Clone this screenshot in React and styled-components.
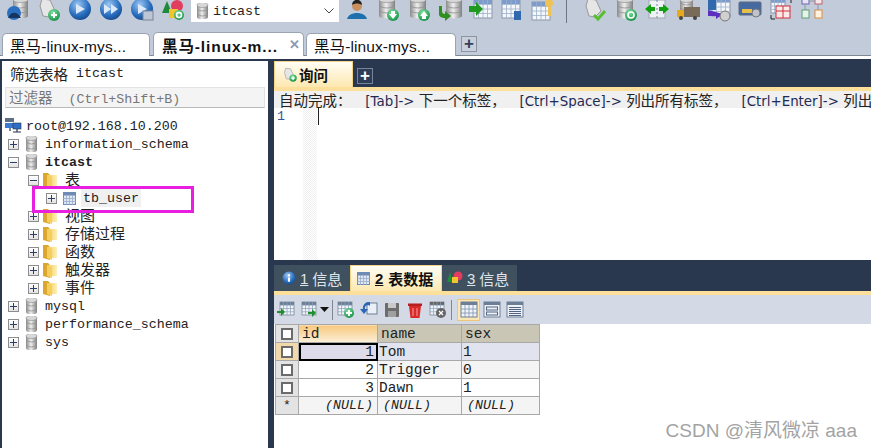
import styled, { createGlobalStyle } from "styled-components";

const GlobalStyle = createGlobalStyle`
  html, body { margin: 0; padding: 0; width: 871px; height: 448px; overflow: hidden; background: #29374f; }
  * { box-sizing: border-box; }
`;

const CJK = `"Noto Sans CJK SC", sans-serif`;
const MONO = `"Liberation Mono", "Noto Sans CJK SC", monospace`;
const SANS = `"Liberation Sans", "Noto Sans CJK SC", sans-serif`;

const Page = styled.div`
  position: relative;
  width: 871px;
  height: 448px;
  overflow: hidden;
  display: flex;
  flex-direction: column;
  background: #29374f;
`;

const Toolbar = styled.div`
  height: 32px;
  flex: none;
  display: flex;
  align-items: flex-start;
  padding-left: 2px;
  background: #c2cbd9;
  overflow: hidden;
`;

const ToolSlot = styled.div`
  width: 31px;
  height: 24px;
  flex: none;
  display: flex;
  justify-content: center;
  margin-top: -2px;
`;

const ToolSeparator = styled.div`
  width: 1px;
  height: 23px;
  margin: 0 12px 0 8px;
  background: #6d7683;
  flex: none;
`;

const DbSelect = styled.div`
  width: 148px;
  height: 22px;
  margin: 0 2px 0 3px;
  flex: none;
  display: flex;
  align-items: center;
  gap: 4px;
  padding-left: 5px;
  background: #fff;
  font: 13.3px ${MONO};
  color: #222;
`;

const Chevron = styled.svg`
  margin-left: auto;
  margin-right: 5px;
`;

const SessionBar = styled.div`
  height: 24px;
  flex: none;
  display: flex;
  align-items: flex-end;
  padding-left: 2px;
  background: #c2cbd9;
  border-bottom: 1px solid #7f8790;
`;

const SessionTab = styled.div`
  width: ${(p) => p.$w}px;
  margin-left: ${(p) => p.$gap}px;
  height: ${(p) => (p.$active ? 24 : 23)}px;
  margin-bottom: -1px;
  padding: 0 0 0 ${(p) => (p.$active ? 8 : 7)}px;
  display: flex;
  align-items: center;
  justify-content: space-between;
  background: #fff;
  border: 1px solid #9aa3b0;
  border-bottom: none;
  border-radius: 5px 5px 0 0;
  font: ${(p) => (p.$active ? "bold" : "normal")} 15.5px ${SANS};
  letter-spacing: ${(p) => (p.$active ? "0.9px" : "0.1px")};
  color: #111;
  white-space: nowrap;
  overflow: hidden;
`;

const CloseMark = styled.span`
  margin-right: 2px;
  font: bold 13px ${SANS};
  color: #8b9bb5;
`;

const AddSession = styled.div`
  width: 16px;
  height: 16px;
  margin: 0 0 3px 5px;
  display: flex;
  align-items: center;
  justify-content: center;
  background: #c9d0db;
  border: 1px solid #8c95a2;
  color: #33415c;
  font: bold 17px/14px ${SANS};
`;

const WhiteStrip = styled.div`
  height: 3px;
  flex: none;
  background: #fff;
`;

const Workspace = styled.div`
  flex: 1;
  min-height: 0;
  display: flex;
  padding-left: 2px;
`;

const LeftPanel = styled.aside`
  width: 266px;
  flex: none;
  margin-top: 2px;
  display: flex;
  flex-direction: column;
  background: #fff;
`;

const FilterTitle = styled.div`
  height: 26px;
  padding: 0 0 2px 8px;
  display: flex;
  align-items: center;
  gap: 8px;
  font: 13.3px ${MONO};
  color: #222;
`;

const FilterInput = styled.div`
  height: 21px;
  margin: 0 3px 0 3px;
  padding-left: 3px;
  background: #f4f4f4;
  border: 1px solid #e3e3e3;
  border-bottom: 1px solid #b9b9b9;
  font: 13.3px/18px ${MONO};
  color: #777;
  white-space: pre;
`;

const Tree = styled.div`
  padding-top: 9px;
  display: flex;
  flex-direction: column;
`;

const TreeRow = styled.div`
  height: 18px;
  display: flex;
  align-items: center;
  padding-left: ${(p) => p.$indent}px;
  font: ${(p) => (p.$bold ? "bold" : "normal")} 13.3px/18px ${MONO};
  color: #222;
  white-space: nowrap;
`;

const Expander = styled.span`
  width: 11px;
  height: 11px;
  flex: none;
  margin-right: 6px;
  position: relative;
  background: linear-gradient(#fff, #e2e2e2);
  border: 1px solid #8d8d8d;
  &::before {
    content: "";
    position: absolute;
    left: 1px;
    right: 1px;
    top: 4px;
    height: 1px;
    background: #2d3f66;
  }
  &::after {
    content: "";
    display: ${(p) => (p.$open ? "none" : "block")};
    position: absolute;
    top: 1px;
    bottom: 1px;
    left: 4px;
    width: 1px;
    background: #2d3f66;
  }
`;

const TreeLabel = styled.span`
  display: block;
  height: 18px;
  margin-left: ${(p) => p.$gap}px;
  padding: ${(p) => (p.$selected ? "2px 2px 0" : "2px 0 0")};
  line-height: 16px;
  background: ${(p) => (p.$selected ? "#f0f0f0" : "transparent")};
`;

const FolderLabel = styled.span`
  display: block;
  height: 16px;
  margin: 0 0 2px 8px;
  font: 15px/16px ${CJK};
`;

const Highlight = styled.div`
  position: absolute;
  left: 32px;
  top: 186px;
  width: 162px;
  height: 27px;
  border: 3px solid #e81fe0;
`;

const RightPanel = styled.main`
  margin-left: 6px;
  flex: 1;
  min-width: 0;
  display: flex;
  flex-direction: column;
`;

const QueryTabs = styled.div`
  height: 26px;
  flex: none;
  margin-top: 2px;
  display: flex;
  align-items: flex-start;
`;

const QueryTab = styled.div`
  width: 79px;
  height: 26px;
  padding-left: 7px;
  display: flex;
  align-items: center;
  gap: 1px;
  background: linear-gradient(#fffdf4, #fde8b0);
  border: 1px solid #f3d488;
  border-bottom: none;
  font: bold 14.5px ${CJK};
  color: #111;
`;

const AddQuery = styled.div`
  width: 16px;
  height: 16px;
  margin: 7px 0 0 4px;
  display: flex;
  align-items: center;
  justify-content: center;
  background: #2e3d57;
  border: 1px solid #77839a;
  color: #fff;
  font: bold 17px/14px ${SANS};
`;

const GoldStrip = styled.div`
  height: 4px;
  flex: none;
  background: #fbdf9b;
`;

const HintBar = styled.div`
  height: 17px;
  flex: none;
  padding-left: 5px;
  background: #f0f0f0;
  font: 13.4px/17px "DejaVu Sans", sans-serif;
  color: #222;
  white-space: pre;
  overflow: hidden;
`;

const Cn = styled.span`
  font-family: ${CJK};
  font-size: 14.5px;
  font-weight: normal;
`;

const HintKey = styled.span`
  color: #1f2a55;
  margin-left: 1px;
`;

const Editor = styled.div`
  height: 152px;
  flex: none;
  display: flex;
  background: #fff;
`;

const Gutter = styled.div`
  width: 29px;
  padding: 0 0 0 3px;
  font: 13.3px/17px ${MONO};
  color: #3155a0;
`;

const FoldMargin = styled.div`
  width: 14px;
  background: repeating-conic-gradient(#f0f0f0 0 25%, #fff 0 50%) 0 0 / 2px 2px;
`;

const Caret = styled.div`
  width: 1px;
  height: 17px;
  margin-left: 1px;
  background: #222;
`;

const ResultTabs = styled.div`
  height: 31px;
  flex: none;
  padding-top: 5px;
  display: flex;
`;

const ResultTab = styled.div`
  width: ${(p) => p.$w}px;
  height: 26px;
  padding-left: ${(p) => (p.$active ? 6 : 8)}px;
  display: flex;
  align-items: center;
  gap: ${(p) => (p.$active ? 5 : 4)}px;
  background: ${(p) => (p.$active ? "linear-gradient(#fffdf4, #fde8b0)" : "#3f505f")};
  border: ${(p) => (p.$active ? "1px solid #f3d488" : "none")};
  border-bottom: none;
  font: ${(p) => (p.$active ? "bold" : "normal")} 15px ${CJK};
  color: ${(p) => (p.$active ? "#111" : "#dfe4ea")};
  &:last-child {
    padding-left: 5px;
  }
`;

const TabNum = styled.span`
  font-family: ${SANS};
  text-decoration: underline;
`;

const ResultBar = styled.div`
  height: 29px;
  flex: none;
  display: flex;
  align-items: center;
  background: #d3dae5;
`;

const BarSlot = styled.div`
  width: ${(p) => p.$w || 23}px;
  height: 22px;
  flex: none;
  display: flex;
  align-items: center;
  justify-content: center;
  gap: 1px;
  background: ${(p) => (p.$on ? "#fbe6b4" : "transparent")};
  border: ${(p) => (p.$on ? "1px solid #edc67a" : "none")};
`;

const BarSeparator = styled.div`
  width: 1px;
  height: 20px;
  margin: 0 ${(p) => p.$right}px 0 ${(p) => p.$left}px;
  flex: none;
  background: #7f8794;
`;

const GridArea = styled.div`
  flex: 1;
  background: #fff;
`;

const DataGrid = styled.table`
  margin-left: 1px;
  border-collapse: collapse;
  table-layout: fixed;
  width: 264px;
  font: 14.5px ${MONO};
  color: #222;
`;

const HeadCell = styled.th`
  height: 18px;
  padding: 0 0 0 3px;
  text-align: left;
  font-weight: normal;
  border: 1px solid #a8a8a8;
  background: ${(p) => (p.$sorted ? "linear-gradient(#f7c87d, #fcf0da)" : "#c9c6b5")};
`;

const MarkCell = styled.td`
  padding: 0;
  height: 18px;
  border: 1px solid #a8a8a8;
  background: ${(p) => (p.$lit ? "#f2d9a9" : "#e3e3e3")};
  text-align: center;
  line-height: 0;
`;

const Star = styled.span`
  font: 13px/14px ${MONO};
`;

const CheckBox = styled.span`
  display: inline-block;
  width: 12px;
  height: 12px;
  background: #fff;
  border: 2px solid #6b6b6b;
`;

const DataCell = styled.td`
  padding: ${(p) => (p.$right ? "0 3px 0 0" : "0 0 0 1px")};
  height: 18px;
  border: 1px solid #a8a8a8;
  text-align: ${(p) => (p.$right ? "right" : "left")};
  background: ${(p) => p.$bg};
  font-style: ${(p) => (p.$nil ? "italic" : "normal")};
  font-size: ${(p) => (p.$nil ? "13.3px" : "14.5px")};
  ${(p) => p.$nil && "padding: 0 0 0 5px;"}
  ${(p) => p.$nil && p.$right && "padding: 0 4px 0 0;"}
  ${(p) => p.$focus && "outline: 2px solid #000; outline-offset: -2px; background: #dddbe9;"}
`;

const Watermark = styled.div`
  position: absolute;
  right: 14px;
  top: 415px;
  font: 19px ${SANS};
  color: #a3a3a3;
  text-shadow: 0 0 1px #fff;
`;

const HiddenDefs = styled.svg`
  position: absolute;
  width: 0;
  height: 0;
`;

const FolderSvg = styled.svg`
  margin-left: -2px;
  flex: none;
`;

function Defs() {
  return (
    <HiddenDefs>
      <defs>
        <linearGradient id="cyl" x1="0" x2="1" y1="0" y2="0">
          <stop offset="0" stopColor="#8b8b8b" />
          <stop offset="0.45" stopColor="#efefef" />
          <stop offset="1" stopColor="#7f7f7f" />
        </linearGradient>
        <radialGradient id="ball" cx="0.4" cy="0.3" r="0.8">
          <stop offset="0" stopColor="#9cc7f2" />
          <stop offset="0.6" stopColor="#2a6fc0" />
          <stop offset="1" stopColor="#10407f" />
        </radialGradient>
        <radialGradient id="greenBall" cx="0.4" cy="0.3" r="0.8">
          <stop offset="0" stopColor="#7fe0a0" />
          <stop offset="1" stopColor="#0c8a3c" />
        </radialGradient>
        <linearGradient id="folder" x1="0" x2="1" y1="0" y2="0">
          <stop offset="0" stopColor="#f2c94e" />
          <stop offset="1" stopColor="#fdf0b8" />
        </linearGradient>
      </defs>
    </HiddenDefs>
  );
}

const Cyl = ({ x = 4, y = 0, w = 16, h = 20 }) => (
  <g>
    <rect x={x} y={y + 2} width={w} height={h - 4} fill="url(#cyl)" />
    <ellipse cx={x + w / 2} cy={y + h - 2} rx={w / 2} ry="2.5" fill="url(#cyl)" />
    <ellipse cx={x + w / 2} cy={y + 2} rx={w / 2} ry="2.5" fill="#d8d8d8" stroke="#8a8a8a" strokeWidth="0.6" />
    <path d={`M${x} ${y + h / 2 - 2}q${w / 2} 4 ${w} 0M${x} ${y + h / 2 + 3}q${w / 2} 4 ${w} 0`} stroke="#8f8f8f" fill="none" strokeWidth="0.8" />
  </g>
);

const GreenBadge = ({ x = 18, y = 17, r = 6, mark = "plus" }) => (
  <g>
    <circle cx={x} cy={y} r={r} fill="url(#greenBall)" />
    {mark === "plus" && <path d={`M${x - 3} ${y}h6M${x} ${y - 3}v6`} stroke="#fff" strokeWidth="2" />}
    {mark === "down" && <path d={`M${x - 2} ${y - 4}h4v3h2l-4 5l-4-5h2z`} fill="#fff" />}
    {mark === "up" && <path d={`M${x - 2} ${y + 4}h4v-3h2l-4-5l-4 5h2z`} fill="#fff" />}
    {mark === "sync" && <circle cx={x} cy={y} r={r / 2} fill="none" stroke="#fff" strokeWidth="1.6" />}
  </g>
);

const Ball = ({ arrows = 1 }) => (
  <g>
    <circle cx="13" cy="11" r="11" fill="url(#ball)" />
    {arrows === 1 && <path d="M9 6l9 5l-9 5z" fill="#dbe9f8" />}
    {arrows === 2 && <path d="M6 6l7 5l-7 5zM13 6l7 5l-7 5z" fill="#dbe9f8" />}
  </g>
);

const TableGrid = ({ x = 3, y = 2, w = 18, h = 18, head = "#7d9ccb", line = "#9db2cc" }) => {
  const lines = [];
  for (let i = 1; i < 4; i++) lines.push(`M${x + (w * i) / 4} ${y}v${h}`, `M${x} ${y + (h * i) / 4}h${w}`);
  return (
    <g>
      <rect x={x} y={y} width={w} height={h} fill="#f3f6fb" stroke="#8b97a8" />
      <rect x={x} y={y} width={w} height={4} fill={head} />
      <path d={lines.join("")} stroke={line} strokeWidth="0.8" />
    </g>
  );
};

const Scroll = () => (
  <path d="M6 1l8 1l5 11l-6 6l-6-1l-3-10z" fill="#e6e6e6" stroke="#999" />
);

const toolIcons = {
  connect: (
    <>
      <Cyl x={8} w={15} />
      <circle cx="9" cy="15" r="7" fill="#2a6fc0" />
      <path d="M3 20c3-7 9-7 13 0z" fill="#16365f" />
    </>
  ),
  newQuery: (
    <>
      <Scroll />
      <GreenBadge />
    </>
  ),
  run: <Ball />,
  runAll: <Ball arrows={2} />,
  runStop: (
    <>
      <Ball />
      <rect x="14" y="13" width="10" height="9" fill="#bcc6d6" stroke="#7b8596" />
    </>
  ),
  shapes: (
    <>
      <path d="M7 3l5 12h-10z" fill="#1e8a3b" />
      <circle cx="17" cy="8" r="6" fill="#e23c5e" />
      <rect x="9" y="11" width="9" height="9" fill="#f0c52e" />
      <GreenBadge x={19} y={17} r={5} mark="sync" />
    </>
  ),
  user: (
    <>
      <circle cx="13" cy="8" r="5" fill="#c98f5f" />
      <path d="M3 21c2-8 18-8 20 0z" fill="#1d6fae" />
      <path d="M8 7c0-7 10-7 10 0c-3-2-7-2-10 0z" fill="#222" />
    </>
  ),
  dbDown: (
    <>
      <Cyl />
      <GreenBadge mark="down" />
    </>
  ),
  dbUp: (
    <>
      <Cyl />
      <GreenBadge mark="up" />
    </>
  ),
  dbIn: (
    <>
      <Cyl x={9} />
      <path d="M2 8v8c0 3 3 4 6 4v3l6-5l-6-5v3c-2 0-3-1-3-3v-5z" fill="#2f8f1f" />
    </>
  ),
  gridIn: (
    <>
      <TableGrid x={6} />
      <path d="M1 8h7v-4l7 7l-7 7v-4h-7z" fill="#1f9a1f" />
    </>
  ),
  gridDoc: (
    <>
      <TableGrid />
      <rect x="15" y="13" width="7" height="9" fill="#3069ae" />
    </>
  ),
  gridKey: (
    <>
      <TableGrid x={2} y={4} />
      <circle cx="19" cy="5" r="4" fill="#eec253" />
      <rect x="18" y="6" width="3" height="12" fill="#eec253" />
    </>
  ),
  scrollCheck: (
    <>
      <Scroll />
      <path d="M12 17l4 4l7-8" stroke="#58c02f" strokeWidth="3" fill="none" />
    </>
  ),
  dbSync: (
    <>
      <Cyl />
      <GreenBadge mark="sync" />
    </>
  ),
  compare: (
    <>
      <rect x="5" y="2" width="16" height="18" fill="#eef1f5" stroke="#a0a8b3" />
      <path d="M13 2v18" stroke="#7c8794" strokeDasharray="2 2" />
      <path d="M1 11l6-5v3h4v4h-4v3zM25 11l-6-5v3h-4v4h4v3z" fill="#10a010" />
    </>
  ),
  truck: (
    <>
      <Cyl x={5} w={13} h={14} />
      <rect x="9" y="9" width="16" height="10" fill="#7a6a58" />
      <rect x="2" y="12" width="7" height="7" fill="#e6a81e" />
      <circle cx="6" cy="20" r="2" fill="#444" />
      <circle cx="20" cy="20" r="2" fill="#444" />
    </>
  ),
  schedule: (
    <>
      <TableGrid x={6} y={0} />
      <rect x="2" y="0" width="8" height="12" fill="#3069ae" />
      <path d="M2 12v6h8v3l7-5" fill="#5a2fc0" />
      <circle cx="19" cy="18" r="5" fill="#d0d0d0" stroke="#777" />
    </>
  ),
  tape: (
    <>
      <rect x="2" y="4" width="22" height="13" rx="1" fill="#466aa0" stroke="#5a6a80" />
      <rect x="5" y="11" width="10" height="4" fill="#e6c04a" />
      <circle cx="19" cy="15" r="4" fill="#bfc4cc" stroke="#777" />
    </>
  ),
  gridRed: (
    <>
      <TableGrid x={3} y={1} w={14} h={14} />
      <rect x="8" y="8" width="14" height="12" fill="#fbeaea" stroke="#d0303c" />
      <path d="M8 13h14M15 8v12" stroke="#d0303c" />
      <path d="M3 17v4h4M19 1h4v4" stroke="#222" fill="none" />
    </>
  ),
  schema: (
    <>
      <rect x="3" y="0" width="7" height="6" fill="#e9e4f4" stroke="#6a62b0" />
      <rect x="16" y="0" width="7" height="6" fill="#f9e8ea" stroke="#c0606c" />
      <rect x="3" y="12" width="7" height="8" fill="#e6f3e8" stroke="#5fa078" />
      <rect x="16" y="12" width="7" height="8" fill="#fdf0dd" stroke="#d89040" />
      <path d="M10 3h6M6 6v6M19 6v6" stroke="#8a96a8" />
    </>
  ),
};

const ToolIcon = ({ kind }) => (
  <ToolSlot>
    <svg width="26" height="24" viewBox="0 0 26 24">
      {toolIcons[kind]}
    </svg>
  </ToolSlot>
);

const DbIcon = () => (
  <svg width="13" height="16" viewBox="0 0 13 16">
    <Cyl x={1} y={0} w={11} h={16} />
  </svg>
);

const FolderIcon = () => (
  <FolderSvg width="14" height="17" viewBox="0 0 14 17">
    <path d="M0 1h5l2 2v13l-7-2z" fill="#dca72e" />
    <path d="M4 3h10v11h-10z" fill="url(#folder)" />
    <path d="M4 3l5 2v11l-5-2z" fill="#f4cf5e" />
  </FolderSvg>
);

const ServerIcon = () => (
  <svg width="17" height="16" viewBox="0 0 17 16">
    <rect x="0" y="0" width="9" height="4" fill="#5d6f84" />
    <rect x="0" y="5" width="10" height="5" fill="#3b7ad0" />
    <rect x="8" y="5" width="8" height="6" fill="#2f6ec4" stroke="#25344d" strokeWidth="0.6" />
    <path d="M5 10v3M12 11v3M8 14h8" stroke="#25344d" strokeWidth="1.2" />
  </svg>
);

const TableIcon = () => (
  <svg width="13" height="13" viewBox="0 0 13 13">
    <rect x="0.5" y="0.5" width="12" height="12" fill="#dfe7f3" stroke="#6f8bb5" />
    <rect x="0.5" y="0.5" width="12" height="3" fill="#6f8bb5" />
    <path d="M3.5 3v10M6.5 3v10M9.5 3v10M0 6.5h13M0 9.5h13" stroke="#97acc9" strokeWidth="0.8" />
  </svg>
);

const InfoIcon = () => (
  <svg width="14" height="14" viewBox="0 0 26 26">
    <circle cx="13" cy="13" r="12" fill="url(#ball)" />
    <path d="M11 6h4v4h-4zM11 12h4v8h-4z" fill="#fff" />
  </svg>
);

const ShapesIcon = () => (
  <svg width="16" height="14" viewBox="0 0 16 14">
    <path d="M3 1l3 10h-6z" fill="#1e8a3b" />
    <circle cx="11" cy="5" r="4.5" fill="#e23c5e" />
    <rect x="5" y="6" width="6" height="6" fill="#f0c52e" />
  </svg>
);

const barIcon = (children) => (
  <svg width="18" height="18" viewBox="0 0 18 18">
    {children}
  </svg>
);

const SmallGrid = ({ x = 3, y = 1, w = 14, h = 13, head = "#6d7f97" }) => {
  const lines = [];
  for (let i = 1; i < 4; i++) lines.push(`M${x + (w * i) / 4} ${y}v${h}`, `M${x} ${y + (h * i) / 4}h${w}`);
  return (
    <g>
      <rect x={x} y={y} width={w} height={h} fill="#f0f3f8" stroke="#7b8796" strokeWidth="0.8" />
      <rect x={x} y={y} width={w} height={3} fill={head} />
      <path d={lines.join("")} stroke="#8aa0bc" strokeWidth="0.7" />
    </g>
  );
};

const PlainLines = ({ rows }) => (
  <g>
    <rect x="1" y="1" width="16" height="15" fill="#eef2f8" stroke="#6d7f97" />
    <rect x="1" y="1" width="16" height="3" fill="#6d7f97" />
    {rows.map((y) => (
      <path key={y} d={`M3 ${y}h12`} stroke="#50647f" />
    ))}
  </g>
);

function Header() {
  const first = ["connect", "newQuery", "run", "runAll", "runStop", "shapes"];
  const second = ["user", "dbDown", "dbUp", "dbIn", "gridIn", "gridDoc", "gridKey"];
  const third = ["scrollCheck", "dbSync", "compare", "truck", "schedule", "tape", "gridRed", "schema"];
  return (
    <>
      <Toolbar>
        {first.map((k) => (
          <ToolIcon key={k} kind={k} />
        ))}
        <DbSelect>
          <DbIcon />
          itcast
          <Chevron width="10" height="6" viewBox="0 0 10 6">
            <path d="M0.5 0.5l4.5 4.5l4.5-4.5" fill="none" stroke="#444" />
          </Chevron>
        </DbSelect>
        {second.map((k) => (
          <ToolIcon key={k} kind={k} />
        ))}
        <ToolSeparator />
        {third.map((k) => (
          <ToolIcon key={k} kind={k} />
        ))}
      </Toolbar>
      <SessionBar>
        <SessionTab $w={148} $gap={0}>黑马-linux-mys...</SessionTab>
        <SessionTab $w={151} $gap={3} $active>
          黑马-linux-m...
          <CloseMark>✕</CloseMark>
        </SessionTab>
        <SessionTab $w={150} $gap={2}>黑马-linux-mys...</SessionTab>
        <AddSession>+</AddSession>
      </SessionBar>
      <WhiteStrip />
    </>
  );
}

const folders = ["视图", "存储过程", "函数", "触发器", "事件"];

function SchemaTree() {
  return (
    <LeftPanel>
      <FilterTitle>
        <Cn>筛选表格</Cn>
        itcast
      </FilterTitle>
      <FilterInput>
        <Cn>过滤器</Cn>{"  "}(Ctrl+Shift+B)
      </FilterInput>
      <Tree>
        <TreeRow $indent={3}>
          <ServerIcon />
          <TreeLabel $gap={4}>root@192.168.10.200</TreeLabel>
        </TreeRow>
        <TreeRow $indent={6}>
          <Expander />
          <DbIcon />
          <TreeLabel $gap={7}>information_schema</TreeLabel>
        </TreeRow>
        <TreeRow $indent={6} $bold>
          <Expander $open />
          <DbIcon />
          <TreeLabel $gap={7}>itcast</TreeLabel>
        </TreeRow>
        <TreeRow $indent={26}>
          <Expander $open />
          <FolderIcon />
          <FolderLabel>表</FolderLabel>
        </TreeRow>
        <TreeRow $indent={44}>
          <Expander />
          <TableIcon />
          <TreeLabel $gap={5} $selected>tb_user</TreeLabel>
        </TreeRow>
        {folders.map((name) => (
          <TreeRow key={name} $indent={26}>
            <Expander />
            <FolderIcon />
            <FolderLabel>{name}</FolderLabel>
          </TreeRow>
        ))}
        {["mysql", "performance_schema", "sys"].map((name) => (
          <TreeRow key={name} $indent={6}>
            <Expander />
            <DbIcon />
            <TreeLabel $gap={7}>{name}</TreeLabel>
          </TreeRow>
        ))}
      </Tree>
    </LeftPanel>
  );
}

const rows = [
  { id: "1", name: "Tom", sex: "1", bg: "#e1e4ef", focus: true, lit: true },
  { id: "2", name: "Trigger", sex: "0", bg: "#f4f4f4" },
  { id: "3", name: "Dawn", sex: "1", bg: "#fff" },
];

function ResultGrid() {
  return (
    <GridArea>
      <DataGrid>
        <colgroup>
          <col width="23" />
          <col width="79" />
          <col width="84" />
          <col width="78" />
        </colgroup>
        <thead>
          <tr>
            <MarkCell as="th"><CheckBox /></MarkCell>
            <HeadCell $sorted>id</HeadCell>
            <HeadCell>name</HeadCell>
            <HeadCell>sex</HeadCell>
          </tr>
        </thead>
        <tbody>
          {rows.map((r) => (
            <tr key={r.id}>
              <MarkCell $lit={r.lit}><CheckBox /></MarkCell>
              <DataCell $right $focus={r.focus} $bg={r.focus ? "#dddbe9" : "#fff"}>{r.id}</DataCell>
              <DataCell $bg={r.bg}>{r.name}</DataCell>
              <DataCell $bg={r.bg}>{r.sex}</DataCell>
            </tr>
          ))}
          <tr>
            <MarkCell><Star>*</Star></MarkCell>
            <DataCell $right $nil $bg="#f4f4f4">(NULL)</DataCell>
            <DataCell $nil $bg="#f4f4f4">(NULL)</DataCell>
            <DataCell $nil $bg="#f4f4f4">(NULL)</DataCell>
          </tr>
        </tbody>
      </DataGrid>
    </GridArea>
  );
}

function QueryPane() {
  return (
    <RightPanel>
      <QueryTabs>
        <QueryTab>
          <svg width="16" height="16" viewBox="0 0 26 24">
            <Scroll />
            <GreenBadge />
          </svg>
          询问
        </QueryTab>
        <AddQuery>+</AddQuery>
      </QueryTabs>
      <GoldStrip />
      <HintBar>
        <Cn>自动完成：</Cn>{"   "}<HintKey>[Tab]-&gt;</HintKey>{" "}<Cn>下一个标签，</Cn>{"   "}<HintKey>[Ctrl+Space]-&gt;</HintKey>{" "}<Cn>列出所有标签，</Cn>{"   "}<HintKey>[Ctrl+Enter]-&gt;</HintKey>{" "}<Cn>列出</Cn>
      </HintBar>
      <Editor>
        <Gutter>1</Gutter>
        <FoldMargin />
        <Caret />
      </Editor>
      <ResultTabs>
        <ResultTab $w={76}>
          <InfoIcon /> <TabNum>1</TabNum> 信息
        </ResultTab>
        <ResultTab $w={92} $active>
          <TableIcon /> <TabNum>2</TabNum> 表数据
        </ResultTab>
        <ResultTab $w={75}>
          <ShapesIcon /> <TabNum>3</TabNum> 信息
        </ResultTab>
      </ResultTabs>
      <GoldStrip />
      <ResultBar>
        <BarSlot>{barIcon(<><SmallGrid /><path d="M0 10h4v-3l4 4l-4 4v-3h-4z" fill="#1d8f2d" /></>)}</BarSlot>
        <BarSlot $w={35}>
          {barIcon(<><SmallGrid x={1} /><path d="M7 11h4v-3l4 4l-4 4v-3h-4z" fill="#1d8f2d" /></>)}
          <svg width="9" height="5" viewBox="0 0 9 5"><path d="M0 0h9l-4.5 5z" fill="#111" /></svg>
        </BarSlot>
        <BarSeparator $left={0} $right={1} />
        <BarSlot>{barIcon(<><SmallGrid x={1} /><GreenBadge x={12} y={12} r={5} /></>)}</BarSlot>
        <BarSlot>{barIcon(<><rect x="7" y="2" width="10" height="11" fill="#eaf0f8" stroke="#6d7f97" /><path d="M10 1a6 6 0 0 0-7 7h-3l4 5l4-5h-3a3 3 0 0 1 5-3z" fill="#2a66b8" /></>)}</BarSlot>
        <BarSlot>{barIcon(<><rect x="2" y="2" width="14" height="14" rx="1" fill="#6d6d6d" /><rect x="5" y="2" width="8" height="5" fill="#c9c9c9" /><rect x="5" y="10" width="8" height="6" fill="#a0a0a0" /></>)}</BarSlot>
        <BarSlot>{barIcon(<><path d="M3 5h12l-1.5 12h-9z" fill="#d92a2a" /><rect x="2" y="2.5" width="14" height="2.5" fill="#b61f1f" /><path d="M7 7v8M11 7v8" stroke="#f4a0a0" /></>)}</BarSlot>
        <BarSlot>{barIcon(<><SmallGrid x={1} head="#666" /><circle cx="12" cy="12" r="5" fill="#666" /><path d="M10 10l4 4M14 10l-4 4" stroke="#fff" strokeWidth="1.3" /></>)}</BarSlot>
        <BarSeparator $left={2} $right={5} />
        <BarSlot $on>{barIcon(<><rect x="1" y="1" width="16" height="15" fill="#f0f3f8" stroke="#6d7f97" /><rect x="1" y="1" width="16" height="3" fill="#6d7f97" /><path d="M5 4v12M9 4v12M13 4v12M1 8h16M1 12h16" stroke="#7f93ad" strokeWidth="0.8" /></>)}</BarSlot>
        <BarSlot>{barIcon(<><rect x="1" y="1" width="16" height="15" fill="#eef2f8" stroke="#6d7f97" /><rect x="1" y="1" width="16" height="3" fill="#6d7f97" /><rect x="3.5" y="6" width="11" height="3" fill="none" stroke="#50647f" /><rect x="3.5" y="11" width="11" height="3" fill="none" stroke="#50647f" /></>)}</BarSlot>
        <BarSlot>{barIcon(<PlainLines rows={[6.5, 8.5, 10.5, 12.5, 14.5]} />)}</BarSlot>
      </ResultBar>
      <ResultGrid />
    </RightPanel>
  );
}

export default function App() {
  return (
    <Page>
      <GlobalStyle />
      <Defs />
      <Header />
      <Workspace>
        <SchemaTree />
        <QueryPane />
      </Workspace>
      <Highlight />
      <Watermark>CSDN @清风微凉 aaa</Watermark>
    </Page>
  );
}
